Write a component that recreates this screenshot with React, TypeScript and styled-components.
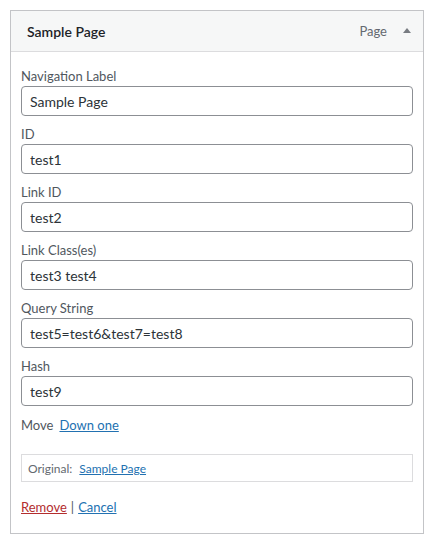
import styled, { createGlobalStyle } from 'styled-components'

//-----------------------------------------------------------------------------
// Global
//-----------------------------------------------------------------------------
const GlobalStyle = createGlobalStyle`
  body {
    margin: 0;
    background: #ffffff;
    font-family: "Segoe UI", Lato, "Noto Sans", sans-serif;
    color: #3c434a;
  }
`

//-----------------------------------------------------------------------------
// Data
//-----------------------------------------------------------------------------
const fields = [
  { label: 'Navigation Label', value: 'Sample Page' },
  { label: 'ID', value: 'test1' },
  { label: 'Link ID', value: 'test2' },
  { label: 'Link Class(es)', value: 'test3 test4' },
  { label: 'Query String', value: 'test5=test6&test7=test8' },
  { label: 'Hash', value: 'test9' }
]

//-----------------------------------------------------------------------------
// Component
//-----------------------------------------------------------------------------
const App = (): JSX.Element => {
  return (
    <Page>
      <GlobalStyle />
      <Panel>
        <Header>
          <Title>Sample Page</Title>
          <Controls>
            <ItemType>Page</ItemType>
            <Toggle viewBox="0 0 8 5" aria-hidden="true">
              <polygon points="4,0 8,5 0,5" />
            </Toggle>
          </Controls>
        </Header>
        <Settings>
          {fields.map((field) => (
            <Field key={field.label}>
              <Label>{field.label}</Label>
              <Input defaultValue={field.value} />
            </Field>
          ))}
          <MoveRow>
            Move
            <Link href="#">Down one</Link>
          </MoveRow>
          <Original>
            Original:
            <Link href="#">Sample Page</Link>
          </Original>
          <Actions>
            <Link href="#" $danger>
              Remove
            </Link>
            <Separator>|</Separator>
            <Link href="#">Cancel</Link>
          </Actions>
        </Settings>
      </Panel>
    </Page>
  )
}

//-----------------------------------------------------------------------------
// Styled Components
//-----------------------------------------------------------------------------
const Page = styled.div`
  padding: 10px 11px 10px 10px;
`
const Panel = styled.div`
  width: 412px;
  border: 1px solid #c3c4c7;
  background: #ffffff;
`
const Header = styled.div`
  display: flex;
  align-items: center;
  justify-content: space-between;
  height: 40px;
  padding: 0 12px 0 16px;
  background: #f6f7f7;
  border-bottom: 1px solid #dcdcde;
`
const Title = styled.div`
  font-size: 14px;
  font-weight: 600;
  color: #1d2327;
`
const Controls = styled.div`
  display: flex;
  align-items: center;
  gap: 16px;
`
const ItemType = styled.span`
  font-size: 13px;
  color: #646970;
`
const Toggle = styled.svg`
  width: 8px;
  height: 5px;
  fill: #787c82;
  margin-top: -2px;
`
const Settings = styled.div`
  padding: 15px 10px 16px;
`
const Field = styled.div`
  margin-bottom: 9px;
`
const Label = styled.label`
  display: block;
  font-size: 13px;
  line-height: 19px;
  color: #50575e;
`
const Input = styled.input`
  box-sizing: border-box;
  display: block;
  width: 100%;
  height: 30px;
  margin: 0;
  padding: 0 8px;
  border: 1px solid #8c8f94;
  border-radius: 4px;
  font-family: inherit;
  font-size: 14px;
  color: #2c3338;
  background: #ffffff;
  &:focus {
    outline: none;
  }
`
const MoveRow = styled.div`
  display: flex;
  gap: 6px;
  margin-top: 10px;
  font-size: 13px;
  line-height: 19px;
  color: #50575e;
`
const Link = styled.a<{ $danger?: boolean }>`
  color: ${(p) => (p.$danger ? '#b32d2e' : '#2271b1')};
  text-decoration: underline;
`
const Original = styled.div`
  display: flex;
  align-items: center;
  gap: 7px;
  box-sizing: border-box;
  height: 28px;
  margin-top: 19px;
  padding: 0 6px;
  border: 1px solid #dcdcde;
  font-size: 12px;
  color: #646970;
`
const Actions = styled.div`
  margin-top: 16px;
  font-size: 13px;
  line-height: 19px;
  color: #50575e;
`
const Separator = styled.span`
  margin: 0 4px;
`

export default App
